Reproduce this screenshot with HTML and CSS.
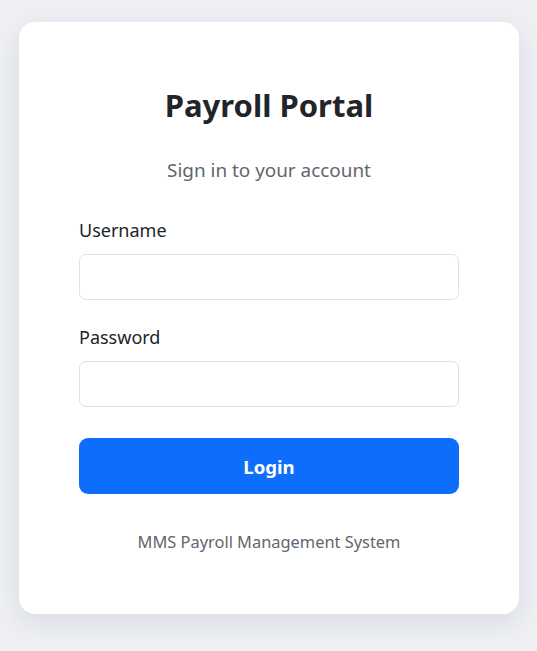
FILE: index.html
```html
<!DOCTYPE html>
<html lang="en">
<head>
<meta charset="utf-8">
<title>Payroll Portal</title>
<link rel="stylesheet" href="styles.css">
</head>
<body>
<main class="card">
  <h1 class="title">Payroll Portal</h1>
  <p class="subtitle">Sign in to your account</p>
  <form class="form">
    <div class="field">
      <label class="label" for="username">Username</label>
      <input class="input" id="username" type="text">
    </div>
    <div class="field">
      <label class="label" for="password">Password</label>
      <input class="input" id="password" type="password">
    </div>
    <button class="btn" type="button">Login</button>
  </form>
  <p class="footer">MMS Payroll Management System</p>
</main>
</body>
</html>
```
FILE: styles.css
```css
* { box-sizing: border-box; }
html, body { margin: 0; padding: 0; }
body {
  background: #eef0f4;
  font-family: "Noto Sans", "Open Sans", sans-serif;
  color: #212529;
  padding: 22px 18px 37px 19px;
}
.card {
  width: 500px;
  background: #fff;
  border-radius: 16px;
  box-shadow: 0 8px 28px rgba(20, 30, 60, 0.10);
  padding: 64px 60px 61px;
  display: flex;
  flex-direction: column;
}
.title {
  margin: 0;
  text-align: center;
  font-size: 31px;
  line-height: 38px;
  font-weight: 700;
  color: #212529;
}
.subtitle {
  margin: 34px 0 0;
  text-align: center;
  font-size: 18.9px;
  line-height: 24px;
  color: #5f666d;
}
.form {
  margin-top: 36px;
  display: flex;
  flex-direction: column;
}
.field {
  display: flex;
  flex-direction: column;
  gap: 12px;
  margin-bottom: 25px;
}
.field + .field { margin-bottom: 31px; }
.label {
  font-size: 18px;
  line-height: 24px;
  color: #212529;
}
.input {
  height: 46px;
  border: 1px solid #dee2e6;
  border-radius: 7px;
  background: #fff;
  font: inherit;
  padding: 0 14px;
}
.btn {
  height: 56px;
  border: none;
  border-radius: 9px;
  background: #0d6efd;
  color: #fff;
  font-family: inherit;
  font-size: 18.6px;
  font-weight: 700;
}
.footer {
  margin: 37px 0 0;
  text-align: center;
  font-size: 16.4px;
  line-height: 22px;
  color: #5f666d;
}
```
